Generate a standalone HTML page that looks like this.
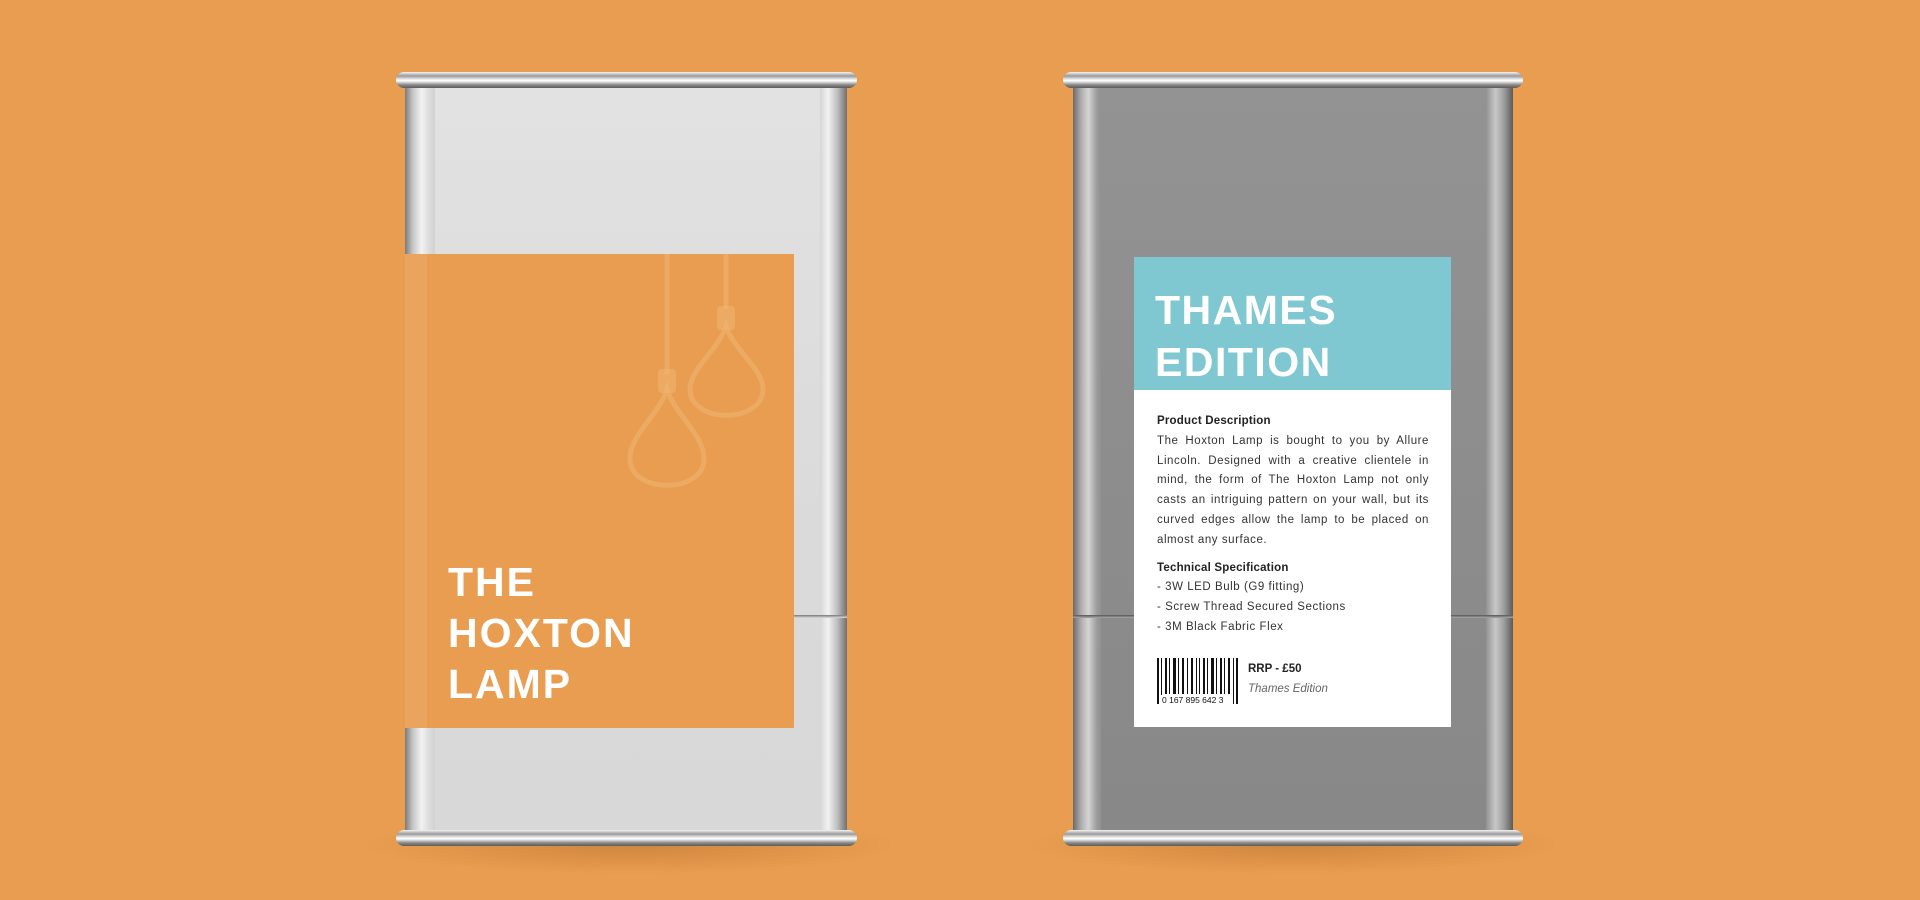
<!DOCTYPE html>
<html><head><meta charset="utf-8"><style>
*{margin:0;padding:0;box-sizing:border-box}
body{width:1920px;height:900px;background:#e99d50;position:relative;overflow:hidden;font-family:"Liberation Sans",sans-serif}
.abs{position:absolute}
.shadow{position:absolute;border-radius:50%;background:radial-gradient(ellipse at center,rgba(150,80,20,.3),rgba(150,80,20,0) 70%)}
.rim{position:absolute;height:16px;border-radius:8px;background:linear-gradient(180deg,#f4f4f4 0%,#9a9a9a 25%,#e8e8e8 45%,#ffffff 55%,#8a8a8a 80%,#5a5a5a 100%)}
.seam{position:absolute;height:3px;background:linear-gradient(180deg,#777,#ddd)}
</style></head><body>
<div class="shadow" style="left:360px;top:815px;width:540px;height:60px"></div>
<div class="shadow" style="left:1025px;top:815px;width:540px;height:60px"></div>

<!-- Left can -->
<div class="abs" style="left:405px;top:82px;width:442px;height:754px;background:linear-gradient(180deg,#e2e2e2,#dadada 60%,#d8d8d8)"></div>
<div class="abs" style="left:405px;top:82px;width:30px;height:754px;background:linear-gradient(90deg,#7a7a7a 0%,#c4c4c4 25%,#f2f2f2 55%,#dcdcdc 80%,#d2d2d2 100%)"></div>
<div class="abs" style="left:820px;top:82px;width:27px;height:754px;background:linear-gradient(90deg,#d6d6d6 0%,#f2f2f2 30%,#bdbdbd 65%,#6f6f6f 100%)"></div>
<div class="seam" style="left:405px;top:615px;width:442px"></div>
<div class="rim" style="left:396px;top:72px;width:461px"></div>
<div class="rim" style="left:396px;top:830px;width:461px"></div>
<div class="abs" style="left:405px;top:254px;width:389px;height:474px;background:#e99d50"></div>
<div class="abs" style="left:405px;top:254px;width:22px;height:474px;background:rgba(255,255,255,.08)"></div>
<svg class="abs" style="left:600px;top:254px" width="200" height="250" viewBox="0 0 200 250">
<g fill="none" stroke="#f0b572" stroke-width="5" opacity=".55">
<line x1="67" y1="0" x2="67" y2="120"/>
<line x1="126" y1="0" x2="126" y2="55"/>
<path d="M67 135 C60 160 30 180 30 205 C30 240 104 240 104 205 C104 180 74 160 67 135Z"/>
<path d="M126 72 C119 95 90 115 90 135 C90 170 163 170 163 135 C163 115 133 95 126 72Z"/>
</g>
<g fill="#f0b572" opacity=".55"><rect x="58" y="115" width="18" height="24" rx="4"/><rect x="117" y="52" width="18" height="24" rx="4"/></g>
</svg>
<div class="abs" style="left:448px;top:557px;color:#fff;font-weight:bold;font-size:41px;line-height:51px;letter-spacing:2px">THE<br>HOXTON<br>LAMP</div>

<!-- Right can -->
<div class="abs" style="left:1073px;top:82px;width:440px;height:754px;background:linear-gradient(180deg,#939393,#8c8c8c 60%,#888)"></div>
<div class="abs" style="left:1073px;top:82px;width:28px;height:754px;background:linear-gradient(90deg,#6a6a6a 0%,#b0b0b0 30%,#d4d4d4 55%,#9c9c9c 85%,#909090 100%)"></div>
<div class="abs" style="left:1486px;top:82px;width:27px;height:754px;background:linear-gradient(90deg,#929292 0%,#c8c8c8 35%,#a0a0a0 65%,#5a5a5a 100%)"></div>
<div class="seam" style="left:1073px;top:615px;width:440px;background:linear-gradient(180deg,#555,#aaa)"></div>
<div class="rim" style="left:1063px;top:72px;width:460px"></div>
<div class="rim" style="left:1063px;top:830px;width:460px"></div>
<div class="abs" style="left:1134px;top:257px;width:317px;height:470px;background:#fff"></div>
<div class="abs" style="left:1134px;top:257px;width:317px;height:133px;background:#7fc8d2"></div>
<div class="abs" style="left:1155px;top:284px;color:#fff;font-weight:bold;font-size:41px;line-height:52px;letter-spacing:1.5px">THAMES<br>EDITION</div>
<div class="abs" style="left:1157px;top:412px;width:272px;color:#222;font-size:11.5px;line-height:19.8px;letter-spacing:0.55px">
<div style="font-weight:bold;letter-spacing:0.2px">Product Description</div>
<div style="text-align:justify;text-align-last:left;color:#333">The Hoxton Lamp is bought to you by Allure Lincoln. Designed with a creative clientele in mind, the form of The Hoxton Lamp not only casts an intriguing pattern on your wall, but its curved edges allow the lamp to be placed on almost any surface.</div>
<div style="font-weight:bold;margin-top:8px;letter-spacing:0.2px">Technical Specification</div>
<div style="color:#333">- 3W LED Bulb (G9 fitting)<br>- Screw Thread Secured Sections<br>- 3M Black Fabric Flex</div>
</div>
<svg class="abs" style="left:1157px;top:658px" width="82" height="46" viewBox="0 0 82 46">
<g fill="#111">
<rect x="0" y="0" width="2" height="46"/><rect x="4" y="0" width="1" height="46"/><rect x="8" y="0" width="2" height="36"/><rect x="12" y="0" width="1" height="36"/><rect x="16" y="0" width="3" height="36"/><rect x="21" y="0" width="1" height="36"/><rect x="25" y="0" width="2" height="36"/><rect x="30" y="0" width="1" height="36"/><rect x="34" y="0" width="2" height="36"/><rect x="39" y="0" width="1" height="36"/><rect x="42" y="0" width="1" height="36"/><rect x="46" y="0" width="2" height="36"/><rect x="50" y="0" width="1" height="36"/><rect x="54" y="0" width="3" height="36"/><rect x="59" y="0" width="1" height="36"/><rect x="63" y="0" width="2" height="36"/><rect x="67" y="0" width="1" height="36"/><rect x="71" y="0" width="2" height="36"/><rect x="76" y="0" width="1" height="46"/><rect x="79" y="0" width="2" height="46"/>
</g>
<rect x="4" y="37" width="72" height="9" fill="#fff"/>
<text x="5" y="45" font-size="8.5" font-family="Liberation Sans" fill="#111">0 167 895 642 3</text>
</svg>
<div class="abs" style="left:1248px;top:663px;font-size:11.5px;font-weight:bold;color:#222">RRP - £50</div>
<div class="abs" style="left:1248px;top:683px;font-size:11.5px;font-style:italic;color:#666">Thames Edition</div>
</body></html>
